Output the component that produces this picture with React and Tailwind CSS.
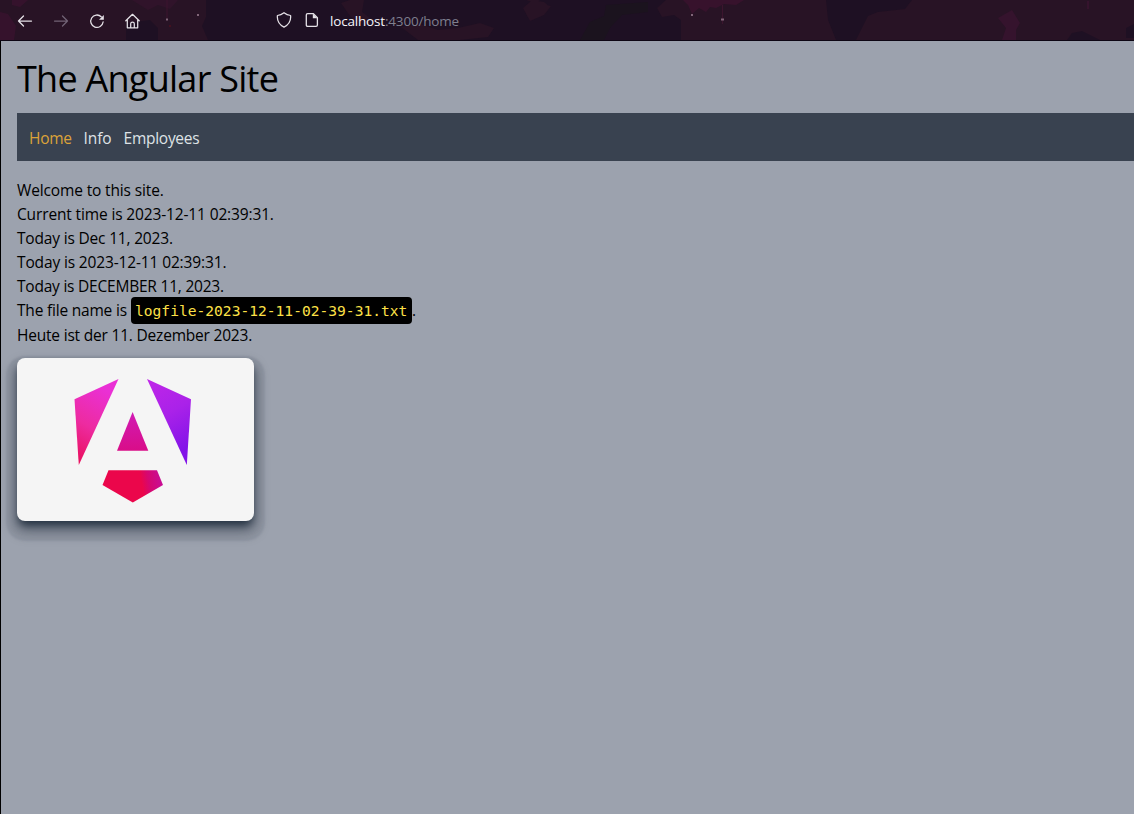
import React from "react";

function Toolbar() {
  return (
    <header className="relative h-[41px] shrink-0 overflow-hidden border-b border-[#0d0614] bg-[#1e1023]">
      <svg className="absolute inset-0" width="1134" height="40" viewBox="0 0 1134 40">
        <path d="M0 0H206V17L202 26L208 40H158V28L150 20L126 23V40H0Z" fill="#281325" />
        <path d="M0 12L8 14L16 26L14 40H0ZM12 0H28L20 7L12 5Z" fill="#35122c" />
        <path d="M132 0H178L170 9L158 5L148 10Z" fill="#30132a" />
        <path d="M341 3L350 0H364L362 12L370 18L360 24L350 16ZM401 27L420 24L438 30L458 28L480 23L494 28L488 37L460 40H418ZM523 8L530 2L551 6L544 15L530 21ZM526 0H540L536 3ZM530 0L544 2L550 7L541 14L533 17Z" fill="#281325" />
        <path d="M580 40L590 22L604 16L606 5L648 2V12L622 15L610 28L604 40Z" fill="#1b131e" />
        <path d="M657 8L666 0H826L828 20L836 40H681V20L674 15L662 17ZM856 40L868 16L878 12L905 9L912 0H1134V40Z" fill="#281325" />
        <path d="M683 0H744L736 5L724 4L716 8L710 7L706 12L699 8L692 14L688 5Z" fill="#37122c" />
        <path d="M998 18L1012 10L1020 23L1016 30L1016 40H1002L1006 28ZM1087 1h2v8h-2Z" fill="#35132d" />
        <path d="M1067 40L1072 33L1082 31L1100 40ZM1126 28L1134 24V38H1126Z" fill="#1e1023" />
        <path d="M167 0V18M722.5 5V24" stroke="#3c152e" />
        <path d="M166 19.5h2M721 19.5h3M691 15h2M197 15h2" stroke="#806578" strokeWidth="2" />
        <path d="M169 26h2" stroke="#5d101c" />
      </svg>
      <div className="relative flex h-[41px] items-center pl-[17px]">
        <svg width="16" height="16" viewBox="0 0 16 16" fill="none" stroke="#e5e1e7" strokeWidth="1.25" strokeLinecap="round" strokeLinejoin="round">
          <path d="M6.5 3L1.5 8L6.5 13M1.5 8H14.5" />
        </svg>
        <svg className="ml-5" width="16" height="16" viewBox="0 0 16 16" fill="none" stroke="#716375" strokeWidth="1.25" strokeLinecap="round" strokeLinejoin="round">
          <path d="M9.5 3L14.5 8L9.5 13M14.5 8H1.5" />
        </svg>
        <svg className="ml-5" width="16" height="16" viewBox="0 0 16 16" fill="none" stroke="#e5e1e7" strokeWidth="1.3" strokeLinecap="round">
          <path d="M12.2 3.7A6.2 6.2 0 1 0 14.1 9" />
          <path d="M14.8 2V6.8H10Z" fill="#e5e1e7" stroke="none" />
        </svg>
        <svg className="ml-5" width="16" height="16" viewBox="0 0 16 16" fill="none" stroke="#e5e1e7" strokeWidth="1.25" strokeLinecap="round" strokeLinejoin="round">
          <path d="M.8 7.8L7.5 1.3L14.2 7.8M2.3 6.6V14.8H12.7V6.6M5.7 14.6V10.8Q5.7 9.1 7.5 9.1Q9.3 9.1 9.3 10.8V14.6" />
        </svg>
        <svg className="-mt-px ml-[135px]" width="16" height="16" viewBox="0 0 16 16" fill="none" stroke="#e5e1e7" strokeWidth="1.25" strokeLinejoin="round">
          <path d="M8 .7Q11 3 14.6 3.5Q15.4 11.2 8 15.1Q.6 11.2 1.4 3.5Q5 3 8 .7Z" />
        </svg>
        <svg className="-mt-px ml-3" width="16" height="16" viewBox="0 0 16 16" fill="none" stroke="#e5e1e7" strokeWidth="1.3" strokeLinejoin="round">
          <path d="M3.7 1.6H9.4L13.4 5.6V13Q13.4 14.4 12 14.4H3.7Q2.3 14.4 2.3 13V3Q2.3 1.6 3.7 1.6Z" />
          <path d="M8.8 1.4V6.2H13.6Z" fill="#e5e1e7" stroke="none" />
        </svg>
        <span className="ml-[10px] pt-[2px] font-['Open_Sans','Noto_Sans',sans-serif] text-[13.5px] tracking-[-0.18px] whitespace-nowrap text-[#7e7f8e]">
          <span className="text-[#f7f5fa]">localhost</span>:4300/home
        </span>
      </div>
    </header>
  );
}

function AngularLogo() {
  return (
    <svg width="237" height="163" viewBox="17 358 237 163">
      <defs>
        <linearGradient id="left" x1="0" y1="1" x2=".3" y2="0">
          <stop offset="0" stopColor="#e90b55" />
          <stop offset=".5" stopColor="#ed2ba0" />
          <stop offset="1" stopColor="#ea30d5" />
        </linearGradient>
        <linearGradient id="right" x1="0" y1="0" x2=".3" y2="1">
          <stop offset="0" stopColor="#c026e8" />
          <stop offset=".5" stopColor="#aa22e9" />
          <stop offset="1" stopColor="#8213e8" />
        </linearGradient>
        <linearGradient id="center" x1="0" y1="0" x2="0" y2="1">
          <stop offset="0" stopColor="#d11bb5" />
          <stop offset="1" stopColor="#d90d88" />
        </linearGradient>
        <linearGradient id="bottom" x1="0" y1="0" x2="1" y2="-.1">
          <stop offset=".6" stopColor="#eb064b" />
          <stop offset=".72" stopColor="#d60770" />
          <stop offset="1" stopColor="#c40fa0" />
        </linearGradient>
      </defs>
      <path d="M118.5 379L74.5 399.3L78.8 465Z" fill="url(#left)" />
      <path d="M147 379L191 399.3L186.8 465Z" fill="url(#right)" />
      <path d="M132.6 412L117 450.8H148.3Z" fill="url(#center)" />
      <path d="M108.5 470.3H157L163 485L132.8 502.5L102.5 485Z" fill="url(#bottom)" />
    </svg>
  );
}

export default function App() {
  return (
    <div className="flex h-[814px] w-[1134px] flex-col overflow-hidden bg-[#9ca2ae] font-['Open_Sans','Noto_Sans',sans-serif] text-black">
      <Toolbar />
      <div className="flex-1 border-l border-black pt-4 pl-4">
        <h1 className="h-14 text-[36px] leading-[43px] tracking-[-0.74px] whitespace-nowrap">The Angular Site</h1>
        <nav className="flex h-12 items-center gap-3 bg-[#394250] px-3 pt-[2px] text-[15.5px] leading-6 text-[#dfe2e6]">
          <a className="tracking-[-0.3px] text-[#dca238]">Home</a>
          <a className="tracking-[-0.1px]">Info</a>
          <a className="tracking-[-0.28px]">Employees</a>
        </nav>
        <main className="pt-[17px] text-[15.5px] leading-6 tracking-[-0.14px] whitespace-nowrap">
          <p>Welcome to this site.</p>
          <p>Current time is 2023-12-11 02:39:31.</p>
          <p className="tracking-[-0.18px]">Today is Dec 11, 2023.</p>
          <p>Today is 2023-12-11 02:39:31.</p>
          <p className="tracking-[-0.22px]">Today is DECEMBER 11, 2023.</p>
          <p className="flex h-[25px] items-center">
            <span className="w-[114px] pb-px tracking-[-0.2px]">The file name is</span>
            <code className="h-[27px] w-[281px] shrink-0 rounded bg-black pl-1 font-['DejaVu_Sans_Mono',monospace] text-[14.6px] leading-[27px] tracking-normal text-[#fde047]">logfile-2023-12-11-02-39-31.txt</code>
            <span className="pb-px">.</span>
          </p>
          <p className="tracking-[-0.2px]">Heute ist der 11. Dezember 2023.</p>
          <figure className="mt-[11px] h-[163px] w-[237px] overflow-hidden rounded-lg bg-[#f5f5f5] shadow-[0_6px_10px_-2px_#1f2d3d,0_9px_14px_2px_rgba(45,55,71,0.4),0_9px_2px_11px_rgba(55,65,81,0.12)]">
            <AngularLogo />
          </figure>
        </main>
      </div>
    </div>
  );
}
